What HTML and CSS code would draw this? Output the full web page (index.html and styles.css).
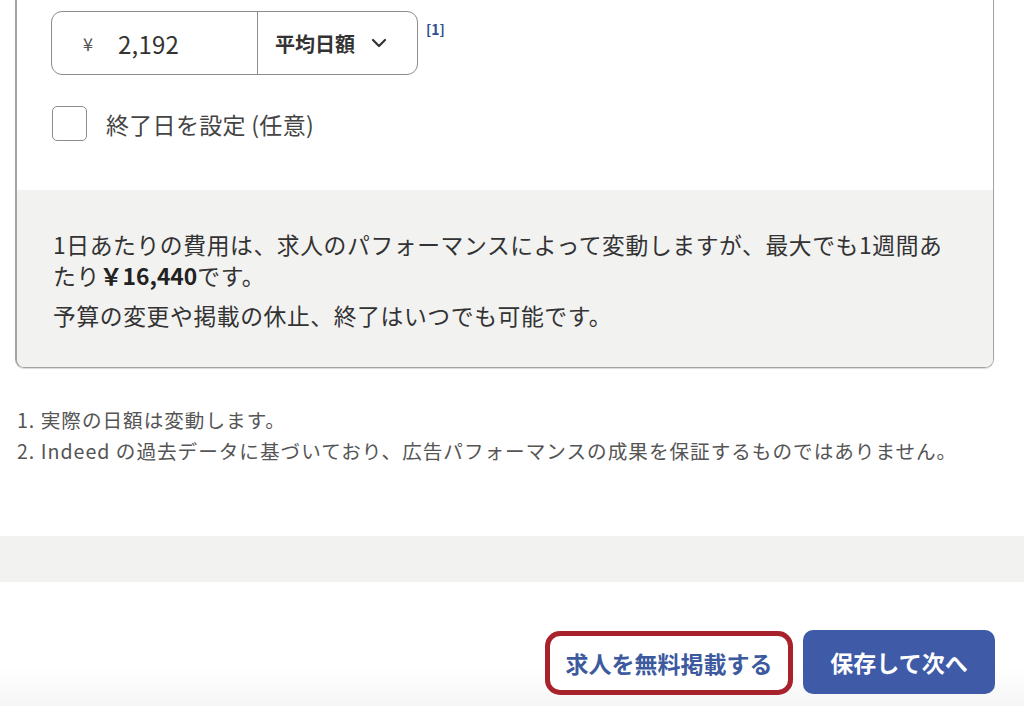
FILE: index.html
```html
<!DOCTYPE html>
<html lang="ja">
<head>
<meta charset="utf-8">
<title>予算設定</title>
<link rel="stylesheet" href="styles.css">
</head>
<body>
<div class="page">
  <section class="card">
    <div class="card-body">
      <div class="budget-row">
        <div class="budget-input">
          <div class="amount-field">
            <span class="yen">¥</span>
            <span class="amount">2,192</span>
          </div>
          <div class="period-select">
            <span>平均日額</span>
            <svg class="chevron" width="16" height="10" viewBox="0 0 16 10" aria-hidden="true"><path d="M2 2 L8 8 L14 2" fill="none" stroke="#333" stroke-width="2.2" stroke-linecap="round" stroke-linejoin="round"/></svg>
          </div>
        </div>
        <span class="ref">[1]</span>
      </div>
      <label class="check">
        <span class="box"></span>
        <span class="check-label">終了日を設定 (任意)</span>
      </label>
    </div>
    <div class="card-note">
      <p>1日あたりの費用は、求人のパフォーマンスによって変動しますが、最大でも1週間あたり<strong>￥16,440</strong>です。</p>
      <p>予算の変更や掲載の休止、終了はいつでも可能です。</p>
    </div>
  </section>

  <div class="notes">
    <p>1. 実際の日額は変動します。</p>
    <p>2. Indeed の過去データに基づいており、広告パフォーマンスの成果を保証するものではありません。</p>
  </div>

  <div class="band"></div>

  <footer class="actions">
    <button class="btn btn-outline">求人を無料掲載する</button>
    <button class="btn btn-primary">保存して次へ</button>
  </footer>
</div>
</body>
</html>
```

FILE: styles.css
```css
* { box-sizing: border-box; }

html, body {
  margin: 0;
  padding: 0;
  background: #ffffff;
}

body {
  font-family: "Noto Sans CJK JP", "Noto Sans", sans-serif;
  color: #333333;
  width: 1024px;
  height: 707px;
  overflow: hidden;
}

.page {
  display: flex;
  flex-direction: column;
}

.card {
  margin: 0 30px 0 15px;
  border: 1px solid #a4a4a4;
  border-left-width: 2px;
  border-top: 0;
  border-radius: 0 0 9px 9px;
  box-shadow: 0 1px 1px rgba(0, 0, 0, 0.15);
  overflow: hidden;
}

.card-body {
  padding: 11px 0 49px 34px;
  background: #ffffff;
}

.budget-row {
  display: flex;
  align-items: flex-start;
}

.budget-input {
  display: flex;
  width: 367px;
  height: 64px;
  border: 1.5px solid #8c8c8c;
  border-radius: 11px;
}

.amount-field {
  width: 206px;
  display: flex;
  align-items: center;
  padding-left: 31px;
  border-right: 1.5px solid #8c8c8c;
}

.yen {
  font-size: 18px;
  color: #555555;
  width: 35px;
}

.amount {
  font-size: 24px;
  color: #333333;
  letter-spacing: 0.2px;
}

.period-select {
  flex: 1;
  display: flex;
  align-items: center;
  padding-left: 17px;
  font-size: 20px;
  font-weight: 700;
  color: #333333;
}

.chevron {
  margin-left: 16px;
}

.ref {
  margin: 9px 0 0 8px;
  font-size: 14px;
  font-weight: 700;
  color: #2f4d8f;
  line-height: 18px;
}

.check {
  display: flex;
  align-items: center;
  margin-top: 31px;
  gap: 19px;
}

.box {
  width: 35px;
  height: 35px;
  border: 1.5px solid #8c8c8c;
  border-radius: 5px;
  margin-left: 1px;
}

.check-label {
  font-size: 23px;
  color: #444444;
  letter-spacing: 0.3px;
}

.card-note {
  background: #f2f2f1;
  padding: 39px 40px 36px 36px;
}

.card-note p {
  margin: 0;
  font-size: 22.8px;
  line-height: 31px;
  letter-spacing: 0.6px;
  color: #333333;
}

.card-note p + p {
  margin-top: 9px;
}

.card-note strong {
  font-weight: 700;
  color: #222222;
  letter-spacing: 0;
}

.notes {
  margin: 36px 0 0 17px;
}

.notes p {
  margin: 0;
  font-size: 19.6px;
  line-height: 31px;
  letter-spacing: 1px;
  color: #555555;
}

.band {
  margin-top: 70px;
  height: 46px;
  background: #f2f2f0;
}

.actions {
  height: 124px;
  display: flex;
  justify-content: flex-end;
  align-items: flex-start;
  gap: 10px;
  padding: 48px 29px 0 0;
  background: linear-gradient(to bottom, #ffffff 0, #ffffff 85px, #f5f5f5 124px);
}

.btn {
  font-family: "Noto Sans CJK JP", "Noto Sans", sans-serif;
  font-size: 23px;
  font-weight: 700;
  height: 64px;
  cursor: pointer;
  display: flex;
  align-items: center;
  justify-content: center;
}

.btn-outline {
  width: 248px;
  background: #ffffff;
  color: #3d5a9e;
  border: 5px solid #a8222b;
  border-radius: 15px;
  margin-top: 1px;
}

.btn-primary {
  width: 192px;
  background: #3f5ba8;
  color: #ffffff;
  border: 0;
  border-radius: 10px;
}
```
